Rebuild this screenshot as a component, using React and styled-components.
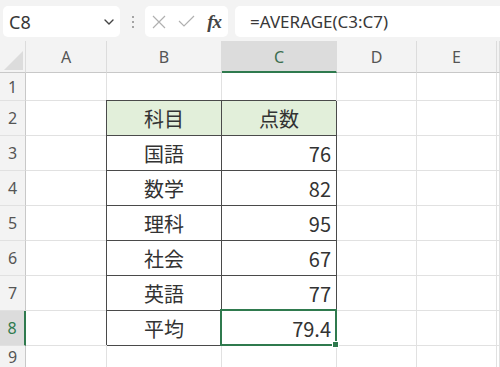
import React from 'react';
import styled, { createGlobalStyle, css } from 'styled-components';

const Global = createGlobalStyle`
  html, body { margin: 0; padding: 0; background: #f3f3f3; }
  body { width: 500px; height: 367px; overflow: hidden; font-family: "Noto Sans", "Noto Sans CJK JP", sans-serif; }
`;

const Page = styled.div`
  width: 500px;
  height: 367px;
  display: flex;
  flex-direction: column;
  background: #f3f3f3;
  overflow: hidden;
`;

const Toolbar = styled.div`
  display: flex;
  align-items: center;
  height: 41px;
  padding: 6px 0 4px 3px;
  box-sizing: border-box;
  flex-shrink: 0;
`;

const Box = styled.div`
  height: 31px;
  background: #fff;
  border-radius: 5px;
  display: flex;
  align-items: center;
  box-sizing: border-box;
`;

const NameBox = styled(Box)`
  width: 117px;
  padding: 0 5px 0 6px;
  justify-content: space-between;
  font-size: 18px;
  color: #383838;
`;

const Dots = styled.div`
  width: 25px;
  display: flex;
  flex-direction: column;
  align-items: center;
  gap: 3px;
  & > span { width: 2px; height: 2px; border-radius: 1px; background: #8a8a8a; }
`;

const FuncBox = styled(Box)`
  width: 83px;
  padding: 0 6px 0 7px;
  justify-content: space-between;
`;

const Fx = styled.span`
  font-family: "Liberation Serif", serif;
  font-style: italic;
  font-weight: bold;
  font-size: 19px;
  color: #444;
  letter-spacing: -1px;
  padding-right: 1px;
`;

const FormulaBox = styled(Box)`
  flex: 1;
  margin-left: 7px;
  border-radius: 5px 0 0 5px;
  padding-left: 15px;
  font-size: 17px;
  color: #383838;
`;

const Sheet = styled.div`
  flex: 1;
  display: grid;
  grid-template-columns: 26px 81px 115px 115px 80px 80px 1fr;
  grid-template-rows: 32px 28px repeat(7, 35px) 1fr;
`;

const Corner = styled.div`
  background: #f3f3f3;
  border-bottom: 1px solid #c8c8c8;
  border-right: 1px solid #dcdcdc;
  display: flex;
  align-items: flex-end;
  justify-content: flex-end;
  padding: 0 2px 2px 0;
  box-sizing: border-box;
`;

const ColHead = styled.div`
  background: ${p => (p.$sel ? '#dcdcdc' : '#f3f3f3')};
  border-right: 1px solid #dcdcdc;
  border-bottom: ${p => (p.$sel ? '2px solid #2f7a4e' : '1px solid #c8c8c8')};
  display: flex;
  align-items: center;
  justify-content: center;
  font-size: 16px;
  color: ${p => (p.$sel ? '#3c6e50' : '#555')};
  box-sizing: border-box;
  padding-top: ${p => (p.$sel ? '1px' : '0')};
`;

const RowHead = styled.div`
  background: ${p => (p.$sel ? '#dcdcdc' : '#f3f3f3')};
  border-right: ${p => (p.$sel ? '2px solid #2f7a4e' : '1px solid #c8c8c8')};
  border-bottom: 1px solid #e1e1e1;
  display: flex;
  align-items: center;
  justify-content: center;
  font-size: 16px;
  color: ${p => (p.$sel ? '#2f7a4e' : '#555')};
  box-sizing: border-box;
`;

const Cell = styled.div`
  position: relative;
  background: ${p => (p.$head ? '#e2efda' : '#fff')};
  border-right: 1px solid ${p => (p.$table ? '#4a4a4a' : '#e1e1e1')};
  border-bottom: 1px solid ${p => (p.$table ? '#4a4a4a' : '#e1e1e1')};
  box-sizing: border-box;
  display: flex;
  align-items: center;
  justify-content: ${p => (p.$num ? 'flex-end' : 'center')};
  padding: ${p => (p.$num ? '0 5px 0 0' : '0')};
  font-family: "Noto Sans CJK JP", "Noto Sans", sans-serif;
  font-size: 20px;
  color: #333;
  ${p => p.$table && css`
    box-shadow: -1px -1px 0 0 #4a4a4a;
  `}
  ${p => p.$sel && css`
    &::after {
      content: '';
      position: absolute;
      left: -2px;
      top: -2px;
      right: -1px;
      bottom: -1px;
      border: 2px solid #2f7a4e;
      pointer-events: none;
    }
    &::before {
      content: '';
      position: absolute;
      right: -3px;
      bottom: -3px;
      width: 5px;
      height: 5px;
      background: #2f7a4e;
      border: 1px solid #fff;
      z-index: 2;
    }
  `}
`;

const Chevron = () => (
  <svg width="12" height="8" viewBox="0 0 12 8">
    <path d="M2 2 L6 6 L10 2" fill="none" stroke="#444" strokeWidth="1.4" strokeLinecap="round" strokeLinejoin="round" />
  </svg>
);

const Cross = () => (
  <svg width="14" height="14" viewBox="0 0 14 14">
    <path d="M1 1 L13 13 M13 1 L1 13" stroke="#b0b0b0" strokeWidth="1.2" fill="none" />
  </svg>
);

const Check = () => (
  <svg width="17" height="13" viewBox="0 0 17 13">
    <path d="M1 6 L6 11 L16 1" stroke="#b0b0b0" strokeWidth="1.2" fill="none" />
  </svg>
);

const Tri = () => (
  <svg width="19" height="19" viewBox="0 0 19 19">
    <path d="M19 0 L19 19 L0 19 Z" fill="#dcdcdc" />
  </svg>
);

const cols = ['A', 'B', 'C', 'D', 'E', ''];

const rows = [
  { n: 1 },
  { n: 2, b: '科目', c: '点数', head: true },
  { n: 3, b: '国語', c: '76' },
  { n: 4, b: '数学', c: '82' },
  { n: 5, b: '理科', c: '95' },
  { n: 6, b: '社会', c: '67' },
  { n: 7, b: '英語', c: '77' },
  { n: 8, b: '平均', c: '79.4', sel: true },
  { n: 9 },
];

export default function App() {
  return (
    <Page>
      <Global />
      <Toolbar>
        <NameBox>
          <span>C8</span>
          <Chevron />
        </NameBox>
        <Dots><span /><span /><span /></Dots>
        <FuncBox>
          <Cross />
          <Check />
          <Fx>fx</Fx>
        </FuncBox>
        <FormulaBox>=AVERAGE(C3:C7)</FormulaBox>
      </Toolbar>
      <Sheet>
        <Corner><Tri /></Corner>
        {cols.map((c, i) => (
          <ColHead key={i} $sel={c === 'C'}>{c}</ColHead>
        ))}
        {rows.map(r => (
          <React.Fragment key={r.n}>
            <RowHead $sel={r.sel}>{r.n}</RowHead>
            <Cell />
            {r.b ? (
              <>
                <Cell $table $head={r.head}>{r.b}</Cell>
                <Cell $table $head={r.head} $num={!r.head} $sel={r.sel}>{r.c}</Cell>
              </>
            ) : (
              <>
                <Cell />
                <Cell />
              </>
            )}
            <Cell />
            <Cell />
            <Cell />
          </React.Fragment>
        ))}
      </Sheet>
    </Page>
  );
}
